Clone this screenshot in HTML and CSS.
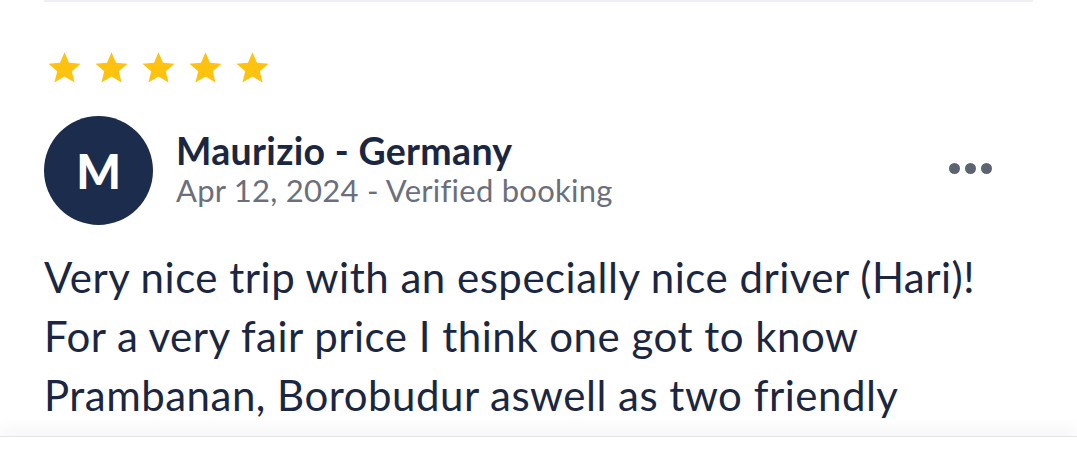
FILE: index.html
```html
<!DOCTYPE html>
<html lang="en">
<head>
  <meta charset="UTF-8">
  <title>Review</title>
  <link rel="stylesheet" href="styles.css">
</head>
<body>
  <div class="review">
    <div class="top-rule"></div>

    <div class="stars">
      <svg class="star" viewBox="0 0 24 24"><path d="M12 1.5l3.1 7.3 7.9.6-6 5.2 1.9 7.7L12 18.2l-6.9 4.1 1.9-7.7-6-5.2 7.9-.6z"/></svg>
      <svg class="star" viewBox="0 0 24 24"><path d="M12 1.5l3.1 7.3 7.9.6-6 5.2 1.9 7.7L12 18.2l-6.9 4.1 1.9-7.7-6-5.2 7.9-.6z"/></svg>
      <svg class="star" viewBox="0 0 24 24"><path d="M12 1.5l3.1 7.3 7.9.6-6 5.2 1.9 7.7L12 18.2l-6.9 4.1 1.9-7.7-6-5.2 7.9-.6z"/></svg>
      <svg class="star" viewBox="0 0 24 24"><path d="M12 1.5l3.1 7.3 7.9.6-6 5.2 1.9 7.7L12 18.2l-6.9 4.1 1.9-7.7-6-5.2 7.9-.6z"/></svg>
      <svg class="star" viewBox="0 0 24 24"><path d="M12 1.5l3.1 7.3 7.9.6-6 5.2 1.9 7.7L12 18.2l-6.9 4.1 1.9-7.7-6-5.2 7.9-.6z"/></svg>
    </div>

    <div class="author">
      <div class="avatar">M</div>
      <div class="author-info">
        <div class="author-name">Maurizio - Germany</div>
        <div class="author-meta">Apr 12, 2024 - Verified booking</div>
      </div>
      <div class="more">
        <span class="dot"></span>
        <span class="dot"></span>
        <span class="dot"></span>
      </div>
    </div>

    <p class="review-text">
      Very nice trip with an especially nice driver (Hari)!<br>
      For a very fair price I think one got to know<br>
      Prambanan, Borobudur aswell as two friendly
    </p>
  </div>
  <div class="bottom-bar"></div>
</body>
</html>
```
FILE: styles.css
```css
body {
  margin: 0;
  padding: 0;
  background-color: #ffffff;
  font-family: "Lato", "Noto Sans", sans-serif;
  color: #1b2741;
  overflow: hidden;
}

.review {
  height: 436px;
  padding: 0 44px;
  display: flex;
  flex-direction: column;
  overflow: hidden;
}

.top-rule {
  height: 2px;
  background-color: #eef0f3;
}

.stars {
  display: flex;
  gap: 12px;
  margin-top: 48px;
  margin-left: 3px;
}

.star {
  width: 35px;
  height: 35px;
  fill: #ffc20e;
}

.author {
  display: flex;
  align-items: center;
  margin-top: 31px;
}

.avatar {
  width: 109px;
  height: 109px;
  border-radius: 50%;
  background-color: #1c2c4c;
  color: white;
  font-weight: 900;
  font-size: 47px;
  display: flex;
  align-items: center;
  justify-content: center;
  flex-shrink: 0;
}

.author-info {
  margin-left: 23px;
  flex: 1;
}

.author-name {
  font-size: 37.5px;
  font-weight: 700;
  letter-spacing: 0.3px;
  line-height: 38px;
  color: #1b2741;
}

.author-meta {
  font-size: 31px;
  letter-spacing: 0.25px;
  line-height: 40px;
  color: #6b6f7c;
}

.more {
  display: flex;
  gap: 5px;
  margin-right: 41px;
  margin-bottom: 4px;
}

.dot {
  width: 11px;
  height: 11px;
  border-radius: 50%;
  background-color: #5d6371;
}

.review-text {
  margin: 23px 0 0;
  font-size: 42px;
  letter-spacing: 0.5px;
  line-height: 59px;
  color: #1b2741;
}

.bottom-bar {
  height: 30px;
  border-top: 1px solid #e3e5ea;
  box-shadow: 0 -10px 14px rgba(20, 30, 60, 0.03);
}
```
